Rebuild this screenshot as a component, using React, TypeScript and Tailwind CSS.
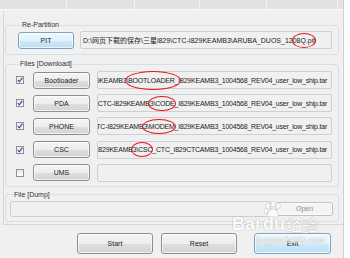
import React from "react";

type Kind = "normal" | "blue" | "disabled";

function Btn({
  children,
  kind = "normal",
  className = "",
}: {
  children: React.ReactNode;
  kind?: Kind;
  className?: string;
}) {
  const styles: Record<Kind, string> = {
    normal:
      "border-[#8e8e8e] bg-[linear-gradient(to_bottom,#f5f5f5_0%,#ededed_50%,#dfdfdf_51%,#d3d3d3_100%)] text-[#1c1c1c]",
    blue: "border-[#7aa3c4] bg-[linear-gradient(to_bottom,#eff8fd_0%,#e2f2fb_50%,#cfe9f8_51%,#bcdff3_100%)] text-[#1c1c1c]",
    disabled: "border-[#bdc1c4] bg-[#f4f4f4] text-[#8d8d8d]",
  };
  return (
    <div
      className={`flex shrink-0 items-center justify-center rounded-[3px] border shadow-[inset_0_0_0_1px_rgba(255,255,255,0.7)] ${styles[kind]} ${className}`}
    >
      {children}
    </div>
  );
}

function Ellipse({
  children,
  big = false,
}: {
  children: React.ReactNode;
  big?: boolean;
}) {
  return (
    <span className="relative">
      {children}
      {big ? (
        <span className="absolute -left-[1px] -right-[6px] -top-[6px] -bottom-[6px] rounded-[50%] border-[1.5px] border-[#e3151d]" />
      ) : (
        <span className="absolute -left-[5px] -right-[1px] -top-[4px] -bottom-[4px] rounded-[50%] border-[1.5px] border-[#e3151d]" />
      )}
    </span>
  );
}

function Check({ checked }: { checked: boolean }) {
  return (
    <div className="flex h-[8px] w-[8px] shrink-0 items-center justify-center border border-[#8f9091] bg-[linear-gradient(to_bottom,#e9e9e9,#fbfbfb)]">
      {checked && (
        <svg width="6" height="6" viewBox="0 0 6 6">
          <path d="M0.8 3.2 L2.3 4.8 L5.3 0.8" fill="none" stroke="#2f4f9c" strokeWidth="1.2" />
        </svg>
      )}
    </div>
  );
}

const PREFIX = "D:\\网页下载的保存\\三星i829\\CTC-I829KEAMB3";

const rows = [
  { label: "Bootloader", checked: true, mark: "\\BOOTLOADER", big: true, suffix: "_I829KEAMB3_1004568_REV04_user_low_ship.tar" },
  { label: "PDA", checked: true, mark: "\\CODE", big: false, suffix: "_I829KEAMB3_1004568_REV04_user_low_ship.tar" },
  { label: "PHONE", checked: true, mark: "\\MODEM", big: false, suffix: "_I829KEAMB3_1004568_REV04_user_low_ship.tar" },
  { label: "CSC", checked: true, mark: "\\CSC", big: false, suffix: "_CTC_I829CTCAMB3_1004568_REV04_user_low_ship.tar" },
];

export default function App() {
  return (
    <div className="relative flex h-[258px] w-[350px] overflow-hidden bg-[#f0f0f0] font-['Liberation_Sans','Noto_Sans_CJK_SC',sans-serif] text-[7px] leading-[9px] text-[#1c1c1c]">
      {/* left main column */}
      <div className="flex w-[344px] shrink-0 flex-col border-r border-[#cfcfcf]">
        {/* top strip */}
        <div className="flex h-[10px] shrink-0 border-b border-[#fafafa] bg-[#e2e2e2]">
          <div className="w-[67px] border-r border-[#f4f4f4]" />
          <div className="w-[68px] border-r border-[#f4f4f4]" />
          <div className="w-[65px] border-r border-[#f4f4f4]" />
          <div className="w-[67px] border-r border-[#f4f4f4]" />
          <div className="w-[71px] border-r border-[#f4f4f4]" />
        </div>
        <div className="h-[1px] shrink-0" />
        {/* panel */}
        <div className="ml-[3px] flex h-[214px] w-[340px] shrink-0 flex-col border-l border-b border-[#d6d6d6] pl-[1px] pr-[4px]">
          {/* Re-Partition */}
          <fieldset className="mt-[9px] min-w-0 rounded-[3px] border border-[#d5dfe5] pb-[5px] pl-[12px] pr-[6px]">
            <legend className="ml-[3px] px-[1px] leading-[10px] text-[#303030]">Re-Partition</legend>
            <div className="mt-[1px] flex items-center gap-[6px]">
              <Btn kind="blue" className="h-[17px] w-[56px]">PIT</Btn>
              <div className="flex h-[18px] min-w-0 flex-1 items-center overflow-x-clip whitespace-nowrap rounded-[2px] border border-[#ccd0d4] bg-[#f0f0f0] pl-[2px]">
                <span>
                  {PREFIX}\ARUBA_DUOS_120<Ellipse>8Q.pit</Ellipse>
                </span>
              </div>
            </div>
          </fieldset>

          {/* Files [Download] */}
          <fieldset className="mt-[4px] min-w-0 rounded-[3px] border border-[#d5dfe5] pb-[4px] pl-[10px] pr-[6px]">
            <legend className="ml-[3px] px-[1px] leading-[10px] text-[#303030]">Files [Download]</legend>
            <div className="mt-[2px] flex flex-col gap-[5.2px]">
              {rows.map((r) => (
                <div key={r.label} className="flex h-[18px] min-w-0 items-center">
                  <Check checked={r.checked} />
                  <Btn className="ml-[9px] h-[17px] w-[57px]">{r.label}</Btn>
                  <div className="ml-[7px] flex h-[18px] min-w-0 flex-1 items-center justify-end overflow-x-clip whitespace-nowrap rounded-[2px] border border-[#ccd0d4] bg-[#f0f0f0] pr-[4px]">
                    <span className="shrink-0 tracking-[-0.22px]">
                      {PREFIX}
                      <Ellipse big={r.big}>{r.mark}</Ellipse>
                      {r.suffix}
                    </span>
                  </div>
                </div>
              ))}
              <div className="flex h-[18px] items-center">
                <Check checked={false} />
                <Btn className="ml-[9px] h-[17px] w-[57px]">UMS</Btn>
                <div className="ml-[7px] h-[18px] min-w-0 flex-1 rounded-[2px] border border-[#ccd0d4] bg-[#f0f0f0]" />
              </div>
            </div>
          </fieldset>

          {/* File [Dump] */}
          <fieldset className="mt-[3px] min-w-0 rounded-[3px] border border-[#d5dfe5] pb-[4px] pl-[4px] pr-[5px]">
            <legend className="ml-[3px] px-[1px] leading-[10px] text-[#303030]">File [Dump]</legend>
            <div className="mt-[1px] flex items-center gap-[5px]">
              <div className="h-[16px] min-w-0 flex-1 rounded-[2px] border border-[#ccd0d4] bg-[#f0f0f0]" />
              <Btn kind="disabled" className="h-[14px] w-[57px]">Open</Btn>
            </div>
          </fieldset>
        </div>

        {/* bottom buttons */}
        <div className="mt-[8px] flex pl-[77px]">
          <Btn className="h-[21px] w-[76px]">Start</Btn>
          <Btn className="ml-[8px] h-[21px] w-[76px]">Reset</Btn>
          <Btn kind="blue" className="ml-[17px] h-[21px] w-[77px]">Exit</Btn>
        </div>
      </div>
      <div className="flex-1 bg-white" />

      {/* Baidu watermark */}
      <div className="pointer-events-none absolute left-[232px] top-[200px] h-[50px] w-[92px] text-white opacity-80">
        <svg className="absolute left-[31px] top-[1px]" width="20" height="17" viewBox="0 0 20 17">
          <g fill="#ffffff" stroke="#c9c9c9" strokeWidth="0.8">
            <ellipse cx="5" cy="5" rx="2.3" ry="3" />
            <ellipse cx="10" cy="3.2" rx="2.3" ry="3" />
            <ellipse cx="15" cy="5" rx="2.3" ry="3" />
            <ellipse cx="3" cy="10" rx="2" ry="2.4" />
            <path d="M10 8 C13 8 17 13 15 15.5 C13.5 16.8 11.5 15.8 10 15.8 C8.5 15.8 6.5 16.8 5 15.5 C3 13 7 8 10 8 Z" />
          </g>
        </svg>
        <div className="absolute left-0 top-[15px] flex items-end font-['Liberation_Sans',sans-serif] text-[18px] font-bold leading-[18px] [text-shadow:0_0_1px_#a8a8a8,0_0_1px_#a8a8a8]">
          <span>Bai</span>
          <span className="ml-[3px]">du</span>
          <span className="ml-[1px] font-['Noto_Sans_CJK_SC',sans-serif] text-[16px] font-normal">经验</span>
        </div>
        <div className="absolute left-[24px] top-[36px] font-['Liberation_Sans',sans-serif] text-[8.5px] leading-[9px] [text-shadow:0_0_1px_#a8a8a8,0_0_1px_#a8a8a8]">
          jingyan.baidu.com
        </div>
      </div>
    </div>
  );
}
